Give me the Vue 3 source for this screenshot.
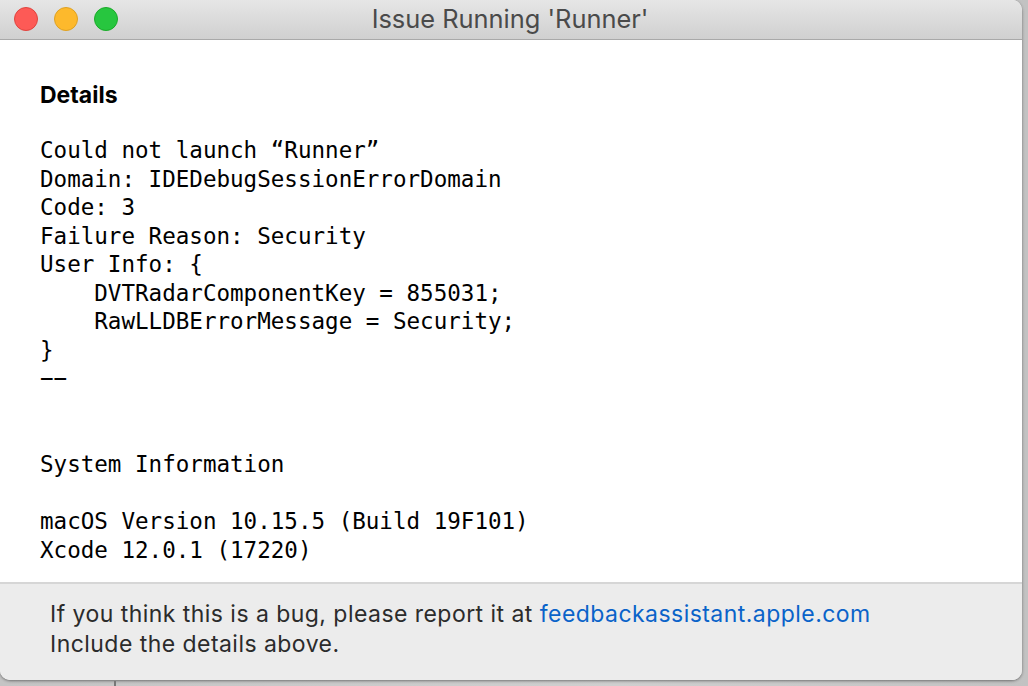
<script setup>
const lines = [
  'Could not launch “Runner”',
  'Domain: IDEDebugSessionErrorDomain',
  'Code: 3',
  'Failure Reason: Security',
  'User Info: {',
  '    DVTRadarComponentKey = 855031;',
  '    RawLLDBErrorMessage = Security;',
  '}',
  '−−',
  '',
  '',
  'System Information',
  '',
  'macOS Version 10.15.5 (Build 19F101)',
  'Xcode 12.0.1 (17220)',
]
</script>

<template>
  <div class="desk">
    <div class="window">
      <header class="titlebar">
        <div class="lights">
          <span class="light red"></span>
          <span class="light yellow"></span>
          <span class="light green"></span>
        </div>
        <div class="title">Issue Running 'Runner'</div>
      </header>
      <main class="content">
        <h2 class="heading">Details</h2>
        <pre class="log"><template v-for="(l, i) in lines" :key="i">{{ l }}
</template></pre>
      </main>
      <footer class="foot">
        <div>If you think this is a bug, please report it at <a class="link">feedbackassistant.apple.com</a></div>
        <div>Include the details above.</div>
      </footer>
    </div>
    <div class="behind"></div>
  </div>
</template>

<style>
html, body { margin: 0; overflow: hidden; }
</style>

<style scoped>
.desk {
  width: 1028px;
  height: 686px;
  background: linear-gradient(90deg, #c4c4c4, #cfcfcf 60%, #c2c2c2);
  position: relative;
  overflow: hidden;
}
.behind {
  position: absolute;
  left: 114px;
  top: 681px;
  width: 2px;
  height: 5px;
  background: #777;
}
.window {
  width: 1022px;
  height: 680px;
  display: flex;
  flex-direction: column;
  background: #fff;
  border-radius: 0 10px 10px 10px;
  overflow: hidden;
  box-shadow: 0 1px 3px rgba(0, 0, 0, .45);
  font-family: Inter, "Liberation Sans", sans-serif;
}
.titlebar {
  height: 39px;
  flex: none;
  display: flex;
  align-items: center;
  position: relative;
  background: linear-gradient(#e6e6e6, #d0d0d0);
  border-bottom: 1px solid #a9a9a9;
}
.lights {
  display: flex;
  gap: 16px;
  padding-left: 14px;
  padding-bottom: 2px;
}
.light {
  width: 24px;
  height: 24px;
  border-radius: 50%;
  box-sizing: border-box;
}
.red { background: #fd5a56; border: 1px solid #e0443e; }
.yellow { background: #fdb92c; border: 1px solid #dea123; }
.green { background: #27c63f; border: 1px solid #1aab29; }
.title {
  position: absolute;
  left: 0;
  right: 2px;
  top: 4px;
  text-align: center;
  font-size: 25.4px;
  line-height: 30px;
  color: #4a4a4a;
}
.content {
  flex: 1;
  padding: 40px 0 0 40px;
  color: #000;
  overflow: hidden;
}
.heading {
  margin: 0 0 27px;
  font-size: 23px;
  line-height: 30px;
  font-weight: 700;
}
.log {
  margin: -1px 0 0;
  font-family: "DejaVu Sans Mono", "Liberation Mono", monospace;
  font-size: 22.55px;
  line-height: 28.55px;
}
.foot {
  flex: none;
  height: 98px;
  box-sizing: border-box;
  padding: 15px 0 0 50px;
  background: #ececec;
  border-top: 2px solid #d6d6d6;
  color: #2b2b2b;
  font-size: 23px;
  letter-spacing: .455px;
  line-height: 30px;
}
.link { color: #0a63c9; }
</style>
